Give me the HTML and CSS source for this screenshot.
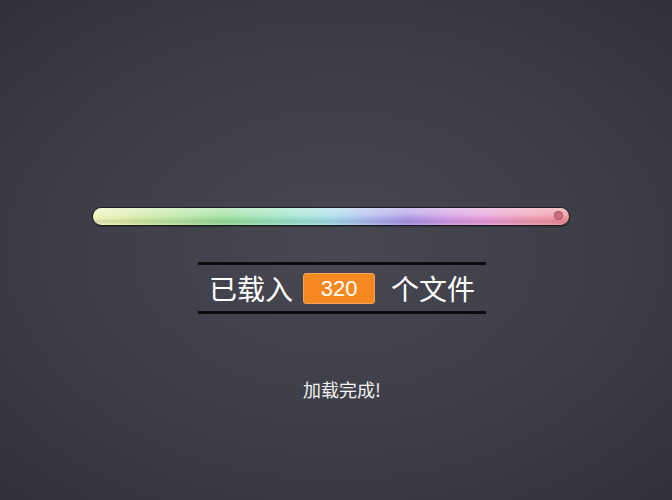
FILE: index.html
```html
<!DOCTYPE html>
<html lang="zh">
<head>
<meta charset="utf-8">
<link rel="stylesheet" href="styles.css">
</head>
<body>
<div class="stage">
  <div class="bar">
    <div class="bar-fill"></div>
    <div class="bar-gloss"></div>
    <div class="knob"></div>
  </div>
  <div class="count">
    <span class="label">已载入</span>
    <span class="num">320</span>
    <span class="label tail">个文件</span>
  </div>
  <div class="done">加载完成!</div>
</div>
</body>
</html>
```
FILE: styles.css
```css
html, body {
  margin: 0;
  padding: 0;
  height: 100%;
}
body {
  background: radial-gradient(ellipse 75% 70% at 50% 50%, #484852 0%, #3d3d47 55%, #30303a 100%);
  font-family: "Noto Sans CJK SC", "Noto Sans", sans-serif;
  color: #fff;
  overflow: hidden;
}
.stage {
  display: flex;
  flex-direction: column;
  align-items: center;
  padding-top: 207px;
}
.bar {
  position: relative;
  width: 476px;
  height: 17px;
  border: 1px solid #1c1c22;
  border-radius: 10px;
  margin-right: 10px;
  overflow: hidden;
  box-shadow: 0 1px 1px rgba(0,0,0,0.3);
}
.bar-fill {
  position: absolute;
  inset: 0;
  background: linear-gradient(90deg, #eef2b4 0%, #c8e8a0 12%, #96de96 28%, #98e2c4 40%, #a0dce4 50%, #aab6ee 58%, #a894e2 66%, #cc98e2 74%, #e49ad8 82%, #ee98ac 92%, #ea8c94 100%);
}
.bar-gloss {
  position: absolute;
  inset: 0;
  background: linear-gradient(180deg, rgba(255,255,255,0.45) 0%, rgba(255,255,255,0.3) 35%, rgba(255,255,255,0.05) 60%, rgba(60,20,80,0.1) 80%, rgba(255,255,255,0.08) 100%);
}
.knob {
  position: absolute;
  right: 6px;
  top: 3px;
  width: 9px;
  height: 9px;
  border-radius: 50%;
  background: #c8707e;
  box-shadow: inset 0 0 0 1px #b05a68;
}
.count {
  display: flex;
  align-items: center;
  width: 288px;
  margin-top: 36px;
  margin-left: 12px;
  padding: 6px 0 6px 11px;
  box-sizing: border-box;
  height: 52px;
  border-top: 3px solid #0c0c0e;
  border-bottom: 3px solid #0c0c0e;
}
.label {
  font-size: 28px;
  line-height: 30px;
  letter-spacing: 0;
}
.num {
  display: inline-block;
  margin-left: 10px;
  width: 70px;
  height: 29px;
  line-height: 29px;
  text-align: center;
  background: #f5891f;
  border: 1px solid #f2a55a;
  border-radius: 3px;
  font-family: "Liberation Sans", Arial, sans-serif;
  font-size: 22px;
}
.tail {
  margin-left: 16px;
}
.done {
  margin-top: 62px;
  margin-left: 12px;
  font-size: 18px;
  color: #f2f2f2;
}
```
